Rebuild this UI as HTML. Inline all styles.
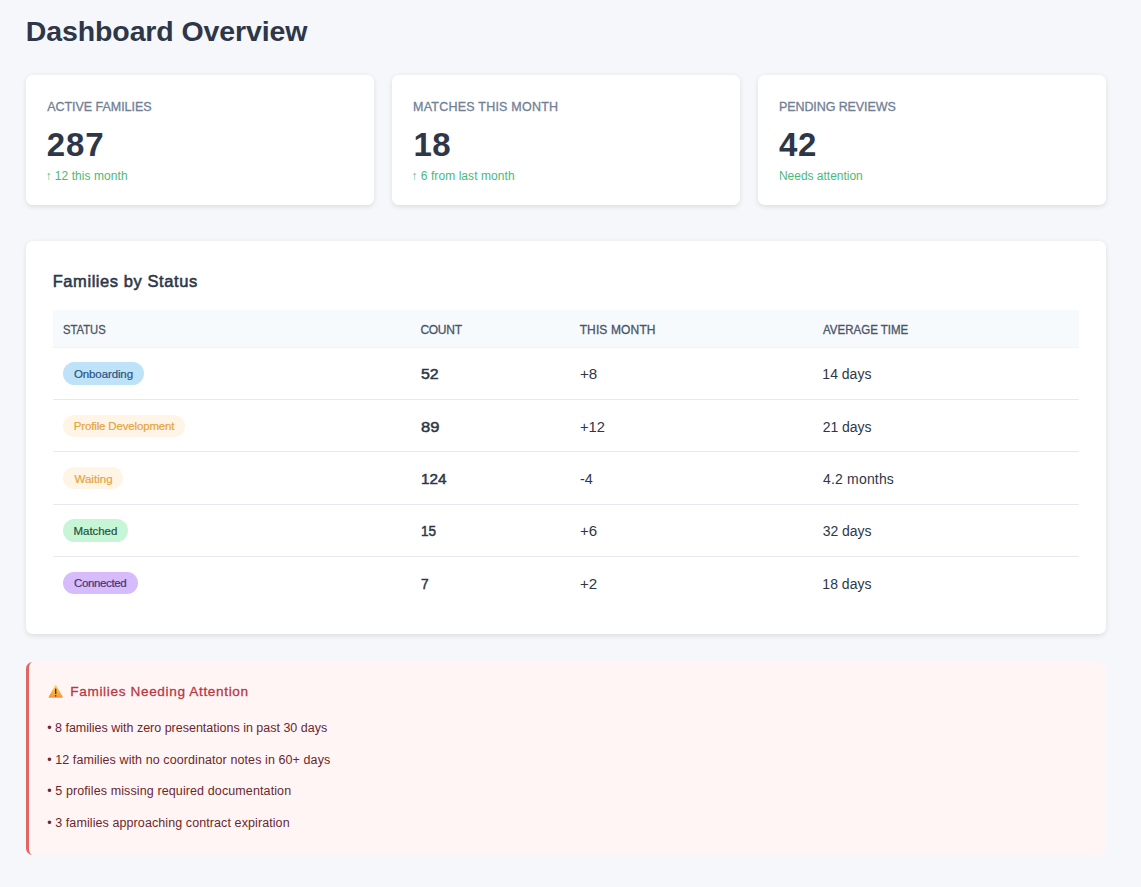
<!DOCTYPE html>
<html lang="en">
<head>
<meta charset="utf-8">
<title>Dashboard Overview</title>
<style>
*{box-sizing:border-box;margin:0;padding:0}
html,body{width:1141px;height:887px;overflow:hidden}
body{background:#f5f7fa;font-family:"Liberation Sans",Arial,sans-serif;color:#2d3748;position:relative}
.t{position:absolute;display:block;line-height:0;white-space:nowrap;font-weight:400;height:0}
.h1{font-weight:700;color:#2d3748}
.card{position:absolute;top:75px;width:348px;height:130px;background:#fff;border-radius:6.5px;box-shadow:0 1.2px 5px rgba(0,0,0,.1)}
.lbl{color:#718096;text-transform:uppercase;-webkit-text-stroke:0.3px #718096}
.num{font-weight:700;color:#2d3748}
.sub{color:#4cb87b}
.panel{position:absolute;left:26px;top:241px;width:1080px;height:393px;background:#fff;border-radius:6.5px;box-shadow:0 1.2px 5px rgba(0,0,0,.1)}
.h2{color:#2d3748;-webkit-text-stroke:0.55px #2d3748}
.thead{position:absolute;left:27px;top:69px;width:1026px;height:38px;background:#f7fafc;border-bottom:1px solid #f0f4f8}
.th{color:#4a5568;text-transform:uppercase;-webkit-text-stroke:0.3px #4a5568}
.row{position:absolute;left:27px;width:1026px;border-bottom:1px solid #e6e9ee}
.row.last{border-bottom:none}
.cell{color:#2d3748}
.cnt{color:#2d3748;-webkit-text-stroke:0.5px #2d3748}
.badge{position:absolute;left:10px;border-radius:12px}
.bt{-webkit-text-stroke:0.2px currentColor}
.bg-on{background:#bee3f8}.bg-pd{background:#fef5e7}.bg-wa{background:#fef5e7}.bg-ma{background:#c6f6d5}.bg-co{background:#d6bcfa}
.b-on{color:#2c5282}.b-pd{color:#e8a33a}.b-wa{color:#e8a33a}.b-ma{color:#22543d}.b-co{color:#44337a}
.alert{position:absolute;left:26px;top:662px;width:1080px;height:193px;background:#fff5f5;border-left:3px solid #e46464;border-radius:6.5px}
.icon{position:absolute;left:18.8px;top:22px}
.h3{color:#b93843;-webkit-text-stroke:0.3px #b93843}
.li{color:#6b272c}

</style>
</head>
<body>
<main>
<h1 id="h1" class="t h1" style="left:25.86px;top:31.11px;font-size:28.5px;letter-spacing:-0.121px">Dashboard Overview</h1>
<section class="stats">
<div class="card" style="left:26px">
<div id="lbl1" class="t lbl" style="left:21.19px;top:32.11px;font-size:12.5px;letter-spacing:-0.036px">Active Families</div>
<div id="num1" class="t num" style="left:20.64px;top:70.11px;font-size:33px;letter-spacing:0.931px">287</div>
<div id="sub1" class="t sub" style="left:19.38px;top:101.11px;font-size:12px;letter-spacing:0.059px">↑ 12 this month</div>
</div>
<div class="card" style="left:392px">
<div id="lbl2" class="t lbl" style="left:21.03px;top:32.11px;font-size:12.5px;letter-spacing:0.229px">Matches This Month</div>
<div id="num2" class="t num" style="left:21.44px;top:70.11px;font-size:33px;letter-spacing:0.577px">18</div>
<div id="sub2" class="t sub" style="left:19.25px;top:101.11px;font-size:12px;letter-spacing:0.078px">↑ 6 from last month</div>
</div>
<div class="card" style="left:758px">
<div id="lbl3" class="t lbl" style="left:21.00px;top:32.11px;font-size:12.5px;letter-spacing:-0.094px">Pending Reviews</div>
<div id="num3" class="t num" style="left:20.94px;top:70.11px;font-size:33px;letter-spacing:0.640px">42</div>
<div id="sub3" class="t sub" style="left:20.94px;top:101.11px;font-size:12px;letter-spacing:-0.015px">Needs attention</div>
</div>
</section>
<section class="panel">
<h2 id="h2" class="t h2" style="left:26.70px;top:40.11px;font-size:16.5px;letter-spacing:0.570px">Families by Status</h2>
<div class="thead">
<div id="th1" class="t th" style="left:10.35px;top:20.11px;font-size:12px;transform:scaleX(0.9370);transform-origin:0 0">Status</div>
<div id="th2" class="t th" style="left:367.42px;top:20.11px;font-size:12px;letter-spacing:-0.266px">Count</div>
<div id="th3" class="t th" style="left:526.64px;top:20.11px;font-size:12px;letter-spacing:0.138px">This Month</div>
<div id="th4" class="t th" style="left:770.23px;top:20.11px;font-size:12px;transform:scaleX(0.9593);transform-origin:0 0">Average Time</div>
</div>
<div class="row" style="top:107px;height:52px">
<span class="badge bg-on" style="top:14px;width:81.0px;height:23px"><div id="bd0" class="t bt b-on" style="left:10.98px;top:12.11px;font-size:11.5px;letter-spacing:-0.114px">Onboarding</div></span>
<div id="ct0" class="t cnt" style="left:368.31px;top:26.11px;font-size:15px;transform:scaleX(1.0617);transform-origin:0 0">52</div>
<div id="mo0" class="t cell" style="left:527.15px;top:26.11px;font-size:14px;transform:scaleX(1.0828);transform-origin:0 0">+8</div>
<div id="av0" class="t cell" style="left:769.37px;top:26.11px;font-size:14px;letter-spacing:-0.003px">14 days</div>
</div>
<div class="row" style="top:159px;height:52px">
<span class="badge bg-pd" style="top:15px;width:121.9px;height:22px"><div id="bd1" class="t bt b-pd" style="left:10.77px;top:11.11px;font-size:11.5px;letter-spacing:-0.155px">Profile Development</div></span>
<div id="ct1" class="t cnt" style="left:368.32px;top:27.11px;font-size:15px;transform:scaleX(1.1025);transform-origin:0 0">89</div>
<div id="mo1" class="t cell" style="left:527.04px;top:27.11px;font-size:14px;transform:scaleX(1.0509);transform-origin:0 0">+12</div>
<div id="av1" class="t cell" style="left:769.77px;top:27.11px;font-size:14px;letter-spacing:-0.047px">21 days</div>
</div>
<div class="row" style="top:211px;height:53px">
<span class="badge bg-wa" style="top:15px;width:59.5px;height:22px"><div id="bd2" class="t bt b-wa" style="left:11.51px;top:12.11px;font-size:11.5px;letter-spacing:0.025px">Waiting</div></span>
<div id="ct2" class="t cnt" style="left:367.70px;top:27.11px;font-size:15px;transform:scaleX(1.0209);transform-origin:0 0">124</div>
<div id="mo2" class="t cell" style="left:526.87px;top:27.11px;font-size:14px;transform:scaleX(1.0275);transform-origin:0 0">-4</div>
<div id="av2" class="t cell" style="left:770.07px;top:27.11px;font-size:14px;letter-spacing:0.172px">4.2 months</div>
</div>
<div class="row" style="top:264px;height:52px">
<span class="badge bg-ma" style="top:14px;width:64.9px;height:23px"><div id="bd3" class="t bt b-ma" style="left:10.59px;top:12.11px;font-size:11.5px;letter-spacing:-0.058px">Matched</div></span>
<div id="ct3" class="t cnt" style="left:368.19px;top:26.11px;font-size:15px;transform:scaleX(0.9014);transform-origin:0 0">15</div>
<div id="mo3" class="t cell" style="left:527.07px;top:26.11px;font-size:14px;transform:scaleX(1.0779);transform-origin:0 0">+6</div>
<div id="av3" class="t cell" style="left:769.63px;top:26.11px;font-size:14px;letter-spacing:-0.026px">32 days</div>
</div>
<div class="row last" style="top:316px;height:52px">
<span class="badge bg-co" style="top:15px;width:75.0px;height:22px"><div id="bd4" class="t bt b-co" style="left:10.94px;top:11.11px;font-size:11.5px;letter-spacing:-0.350px">Connected</div></span>
<div id="ct4" class="t cnt" style="left:368.14px;top:27.11px;font-size:15px;transform:scaleX(0.9138);transform-origin:0 0">7</div>
<div id="mo4" class="t cell" style="left:526.75px;top:27.11px;font-size:14px;transform:scaleX(1.0798);transform-origin:0 0">+2</div>
<div id="av4" class="t cell" style="left:769.37px;top:27.11px;font-size:14px;letter-spacing:0.014px">18 days</div>
</div>
</section>
<section class="alert">
<svg class="icon" width="15" height="15" viewBox="0 0 15 15"><defs><linearGradient id="wg" x1="0" y1="0" x2="0" y2="1"><stop offset="0" stop-color="#fbd45c"/><stop offset="1" stop-color="#f6963c"/></linearGradient></defs><path d="M7.7 1.6 L14.2 13.1 H1.2 Z" fill="url(#wg)" stroke="url(#wg)" stroke-width="1.2" stroke-linejoin="round"/><rect x="7.05" y="4.4" width="1.3" height="5.5" rx="0.5" fill="#3a2a1c"/><rect x="7.05" y="10.9" width="1.3" height="1.6" rx="0.5" fill="#3a2a1c"/></svg>
<h3 id="h3" class="t h3" style="left:41.34px;top:30.11px;font-size:13.6px;letter-spacing:0.642px">Families Needing Attention</h3>
<p id="li0" class="t li" style="left:18.17px;top:66.11px;font-size:12.5px;letter-spacing:-0.004px">• 8 families with zero presentations in past 30 days</p>
<p id="li1" class="t li" style="left:18.17px;top:98.11px;font-size:12.5px;letter-spacing:0.092px">• 12 families with no coordinator notes in 60+ days</p>
<p id="li2" class="t li" style="left:18.17px;top:129.11px;font-size:12.5px;letter-spacing:0.113px">• 5 profiles missing required documentation</p>
<p id="li3" class="t li" style="left:18.17px;top:161.11px;font-size:12.5px;letter-spacing:0.091px">• 3 families approaching contract expiration</p>
</section>
</main>
</body>
</html>
